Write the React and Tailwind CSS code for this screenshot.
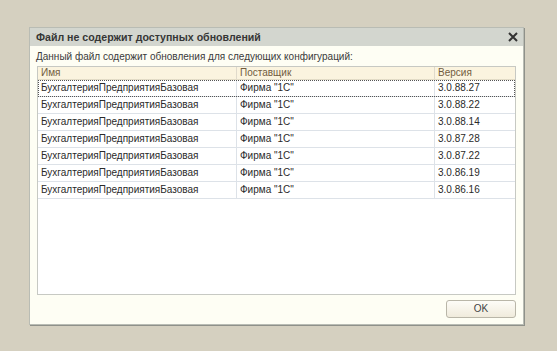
import React from 'react';

const rows = [
    '3.0.88.27',
    '3.0.88.22',
    '3.0.88.14',
    '3.0.87.28',
    '3.0.87.22',
    '3.0.86.19',
    '3.0.86.16',
];

const App = () => {
    return (
        <div className="w-[557px] h-[351px] bg-[#d5d0c0] pl-[29px] pt-[27px] font-['Liberation_Sans',Arial,sans-serif]">
            {/* Dialog window */}
            <div className="w-[495px] h-[298px] flex flex-col bg-[#fefef4] border border-[#b9bcb4] shadow-[1px_1px_0_#8f918a]">
                <div className="h-[18px] shrink-0 bg-[#d3d6cf] flex items-center justify-between pl-[6px] pr-[5px]">
                    <span className="text-[10.6px] font-bold text-[#363636] leading-none">
                        Файл не содержит доступных обновлений
                    </span>
                    <svg width="10" height="10" viewBox="0 0 10 10">
                        <path d="M1 1 L9 9 M9 1 L1 9" stroke="#333" strokeWidth="2" />
                    </svg>
                </div>

                <div className="flex-1 flex flex-col pl-[7px] pr-[7px]">
                    <p className="text-[10px] text-[#3a3a3a] leading-none mt-[6px] ml-[-1px]">
                        Данный файл содержит обновления для следующих конфигураций:
                    </p>

                    <div className="mt-[4px] h-[229px] bg-white border border-[#c7c9c3] flex flex-col text-[10px] leading-none">
                        <div className="grid grid-cols-[199px_198px_1fr] h-[13px] bg-[#fbf4df] border-b border-[#e3dcc6] text-[#725c3e]">
                            <div className="pl-[3px] flex items-center border-r border-[#e0dacb]">Имя</div>
                            <div className="pl-[3px] flex items-center border-r border-[#e0dacb]">Поставщик</div>
                            <div className="pl-[3px] flex items-center">Версия</div>
                        </div>
                        {rows.map((ver, i) => (
                            <div
                                key={ver}
                                className={`grid grid-cols-[199px_198px_1fr] h-[17px] text-[#2a2a2a] border-b border-[#dde2e8] ${
                                    i === 0 ? 'outline-1 outline-dotted outline-[#555] -outline-offset-1' : ''
                                }`}
                            >
                                <div className="pl-[3px] flex items-center border-r border-[#dde2e8]">
                                    БухгалтерияПредприятияБазовая
                                </div>
                                <div className="pl-[3px] flex items-center border-r border-[#dde2e8]">
                                    Фирма "1С"
                                </div>
                                <div className="pl-[3px] flex items-center">{ver}</div>
                            </div>
                        ))}
                    </div>

                    <div className="flex justify-end mt-[5px]">
                        <button className="w-[70px] h-[18px] rounded-[3px] border border-[#b9b6a8] bg-gradient-to-b from-[#fdfcf7] to-[#f0ebdc] text-[10px] text-[#444] leading-none">
                            OK
                        </button>
                    </div>
                </div>
            </div>
        </div>
    );
};

export default App;
